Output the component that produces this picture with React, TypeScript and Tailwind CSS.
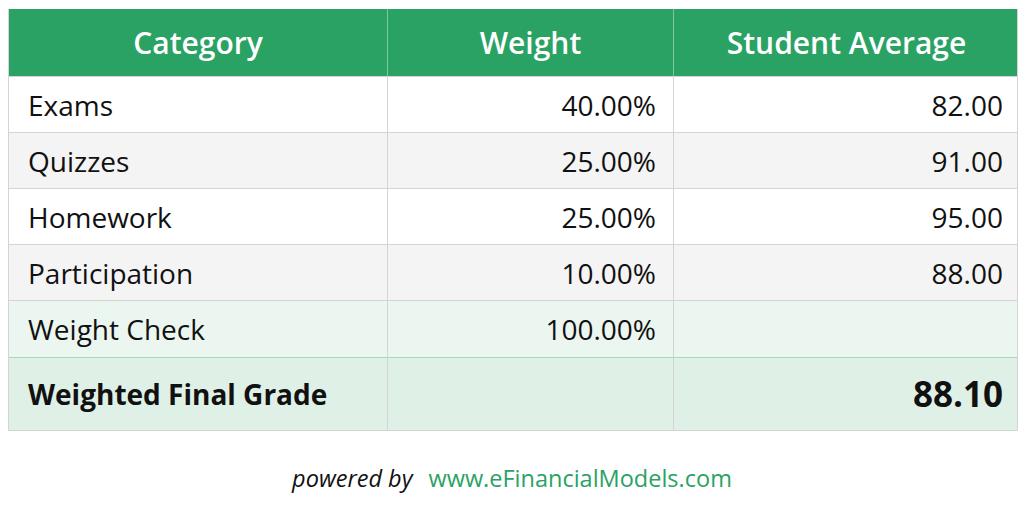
import React from "react";

const rows = [
  { c: "Exams", w: "40.00%", a: "82.00", bg: "bg-white" },
  { c: "Quizzes", w: "25.00%", a: "91.00", bg: "bg-[#f4f4f4]" },
  { c: "Homework", w: "25.00%", a: "95.00", bg: "bg-white" },
  { c: "Participation", w: "10.00%", a: "88.00", bg: "bg-[#f4f4f4]" },
];

export default function App() {
  return (
    <div
      className="w-[1024px] h-[512px] bg-white pt-[9px]"
      style={{ fontFamily: '"Open Sans", sans-serif' }}
    >
      <div className="ml-[8px] w-[1010px] border-l border-r border-b border-[#d4d4d4]">
        <div className="grid grid-cols-[378px_286px_346px] h-[67px] bg-[#2aa264] text-white font-semibold text-[30px]">
          <div className="flex items-center justify-center">Category</div>
          <div className="flex items-center justify-center border-l border-[#7fc79d]">Weight</div>
          <div className="flex items-center justify-center border-l border-[#7fc79d]">Student Average</div>
        </div>
        {rows.map((r) => (
          <div
            key={r.c}
            className={`grid grid-cols-[378px_286px_346px] h-[56px] border-t border-[#d4d4d4] text-[28px] text-[#111] ${r.bg}`}
          >
            <div className="flex items-center pl-[19px]">{r.c}</div>
            <div className="flex items-center justify-end pr-[17px] border-l border-[#d4d4d4]">{r.w}</div>
            <div className="flex items-center justify-end pr-[16px] border-l border-[#d4d4d4]">{r.a}</div>
          </div>
        ))}
        <div className="grid grid-cols-[378px_286px_346px] h-[57px] border-t border-[#d4d4d4] text-[28px] text-[#111] bg-[#ecf6f0]">
          <div className="flex items-center pl-[19px]">Weight Check</div>
          <div className="flex items-center justify-end pr-[17px] border-l border-[#d4d4d4]">100.00%</div>
          <div className="border-l border-[#d4d4d4]"></div>
        </div>
        <div className="grid grid-cols-[378px_286px_346px] h-[73px] border-t border-[#a8d9bb] bg-[#dff0e6] text-[#111] font-bold">
          <div className="flex items-center pl-[19px] text-[28px]">Weighted Final Grade</div>
          <div className="border-l border-[#d4d4d4]"></div>
          <div className="flex items-center justify-end pr-[16px] border-l border-[#d4d4d4] text-[35px]">88.10</div>
        </div>
      </div>
      <div className="flex justify-center items-center gap-[16px] mt-[30px] text-[23.5px]">
        <span className="italic text-[#111]">powered by</span>
        <span className="text-[#2aa264]">www.eFinancialModels.com</span>
      </div>
    </div>
  );
}
